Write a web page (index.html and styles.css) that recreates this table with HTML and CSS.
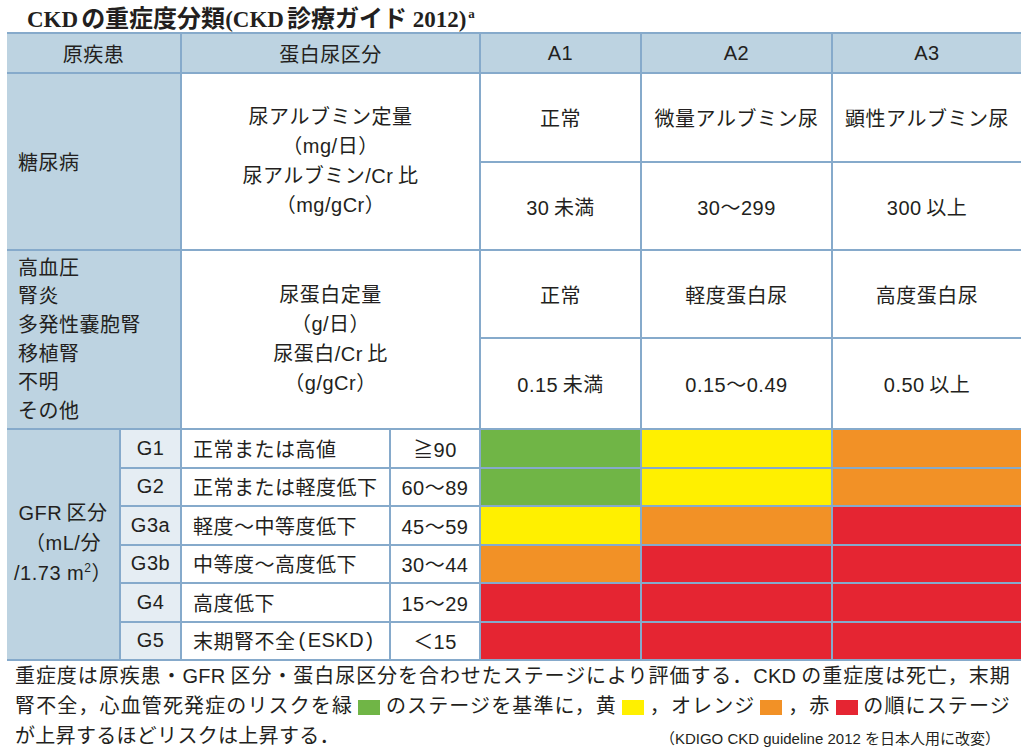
FILE: index.html
```html
<!DOCTYPE html>
<html lang="ja">
<head>
<meta charset="utf-8">
<title>CKDの重症度分類</title>
<link rel="stylesheet" href="styles.css">
</head>
<body>
<h1 class="title">CKD<span class="jp">の重症度分類</span>(CKD<span class="jp">診療ガイド</span> 2012)<sup class="sup">a</sup></h1>
<div class="grid">
  <div class="cell hd span2">原疾患</div>
  <div class="cell hd span2">蛋白尿区分</div>
  <div class="cell hd">A1</div>
  <div class="cell hd">A2</div>
  <div class="cell hd">A3</div>

  <div class="cell side span2 rspan2 left">糖尿病</div>
  <div class="cell span2 rspan2 stack">
    <div>尿アルブミン定量</div>
    <div>（mg/日）</div>
    <div>尿アルブミン/Cr&#8201;比</div>
    <div>（mg/gCr）</div>
  </div>
  <div class="cell">正常</div>
  <div class="cell">微量アルブミン尿</div>
  <div class="cell">顕性アルブミン尿</div>
  <div class="cell">30&#8201;未満</div>
  <div class="cell">30〜299</div>
  <div class="cell">300&#8201;以上</div>

  <div class="cell side span2 rspan2 list">
    <div>高血圧</div>
    <div>腎炎</div>
    <div>多発性嚢胞腎</div>
    <div>移植腎</div>
    <div>不明</div>
    <div>その他</div>
  </div>
  <div class="cell span2 rspan2 stack">
    <div>尿蛋白定量</div>
    <div>（g/日）</div>
    <div>尿蛋白/Cr&#8201;比</div>
    <div>（g/gCr）</div>
  </div>
  <div class="cell">正常</div>
  <div class="cell">軽度蛋白尿</div>
  <div class="cell">高度蛋白尿</div>
  <div class="cell">0.15&#8201;未満</div>
  <div class="cell">0.15〜0.49</div>
  <div class="cell">0.50&#8201;以上</div>

  <div class="cell side gfr">
    <div>GFR&#8201;区分</div>
    <div>（mL/分</div>
    <div>/1.73 m<sup class="sq">2</sup>）</div>
  </div>
  <div class="cell gl">G1</div>
  <div class="cell desc">正常または高値</div>
  <div class="cell">≧90</div>
  <div class="cell green"></div>
  <div class="cell yellow"></div>
  <div class="cell orange"></div>

  <div class="cell gl">G2</div>
  <div class="cell desc">正常または軽度低下</div>
  <div class="cell">60〜89</div>
  <div class="cell green"></div>
  <div class="cell yellow"></div>
  <div class="cell orange"></div>

  <div class="cell gl">G3a</div>
  <div class="cell desc">軽度〜中等度低下</div>
  <div class="cell">45〜59</div>
  <div class="cell yellow"></div>
  <div class="cell orange"></div>
  <div class="cell red"></div>

  <div class="cell gl">G3b</div>
  <div class="cell desc">中等度〜高度低下</div>
  <div class="cell">30〜44</div>
  <div class="cell orange"></div>
  <div class="cell red"></div>
  <div class="cell red"></div>

  <div class="cell gl">G4</div>
  <div class="cell desc">高度低下</div>
  <div class="cell">15〜29</div>
  <div class="cell red"></div>
  <div class="cell red"></div>
  <div class="cell red"></div>

  <div class="cell gl">G5</div>
  <div class="cell desc">末期腎不全<span class="pl">(</span>ESKD<span class="pr">)</span></div>
  <div class="cell">＜15</div>
  <div class="cell red"></div>
  <div class="cell red"></div>
  <div class="cell red"></div>
</div>
<div class="note">
  <div class="jl">重症度は原疾患・GFR&#8201;区分・蛋白尿区分を合わせたステージにより評価する．CKD&#8201;の重症度は死亡，末期</div>
  <div class="jl">腎不全，心血管死発症のリスクを緑<span class="sw green"></span>のステージを基準に，黄<span class="sw yellow"></span>，オレンジ<span class="sw orange"></span>，赤<span class="sw red"></span>の順にステージ</div>
  <div class="last">
    <span>が上昇するほどリスクは上昇する．</span>
    <span class="credit">（KDIGO CKD guideline 2012 を日本人用に改変）</span>
  </div>
</div>
</body>
</html>
```
FILE: styles.css
```css
* {
  box-sizing: border-box;
  margin: 0;
  padding: 0;
}

body {
  width: 1024px;
  height: 753px;
  overflow: hidden;
  background: #ffffff;
  color: #231f20;
  font-family: "Liberation Sans", "Noto Sans CJK JP", sans-serif;
}

.title {
  height: 32px;
  padding: 5px 0 0 27px;
  font-family: "Liberation Serif", "Noto Sans CJK JP", serif;
  font-weight: 700;
  font-size: 23px;
  line-height: 28px;
  white-space: nowrap;
}

.title .jp {
  font-size: 24px;
  margin-left: 3px;
}

.sup {
  font-size: 13px;
  vertical-align: 9px;
  line-height: 0;
  margin-left: 2px;
}

.grid {
  margin-left: 7px;
  width: 1014px;
  display: grid;
  grid-template-columns: 112px 59px 207px 88px 159px 189px 188px;
  grid-template-rows: 38px 87px 86px 86px 89px repeat(6, 36.5px);
  gap: 2px;
  padding: 2px 0;
  background: #86aacb;
  font-size: 20px;
  letter-spacing: 0.5px;
}

.cell {
  background: #ffffff;
  display: flex;
  align-items: center;
  justify-content: center;
  text-align: center;
  white-space: nowrap;
}

.span2 {
  grid-column: span 2;
}

.rspan2 {
  grid-row: span 2;
}

.hd,
.side {
  background: #bdd3e1;
}

.left {
  justify-content: flex-start;
  padding-left: 11px;
}

.stack {
  flex-direction: column;
  line-height: 29.5px;
}

.list {
  flex-direction: column;
  align-items: flex-start;
  padding-left: 11px;
  line-height: 28.6px;
}

.gfr {
  grid-row: span 6;
  flex-direction: column;
  line-height: 30px;
  padding-bottom: 4px;
}

.sq {
  font-size: 12px;
  vertical-align: 8px;
  line-height: 0;
}

.gl {
  background: #e5edf3;
}

.desc {
  justify-content: flex-start;
  padding-left: 11px;
}

.pl {
  margin: 0 2px 0 3px;
}

.pr {
  margin-left: 2px;
}

.green {
  background: #70b546;
}

.yellow {
  background: #fff000;
}

.orange {
  background: #f29126;
}

.red {
  background: #e52532;
}

.note {
  padding: 0 14px 0 15px;
  font-size: 20px;
  line-height: 30px;
  letter-spacing: 0.3px;
}

.jl {
  text-align: justify;
  text-align-last: justify;
}

.sw {
  display: inline-block;
  width: 22px;
  height: 15px;
  margin: 0 5px;
  vertical-align: middle;
}

.last {
  display: flex;
  justify-content: space-between;
  align-items: flex-end;
}

.credit {
  font-size: 15px;
  line-height: 24px;
  letter-spacing: 0;
  margin-right: 10px;
}
```
